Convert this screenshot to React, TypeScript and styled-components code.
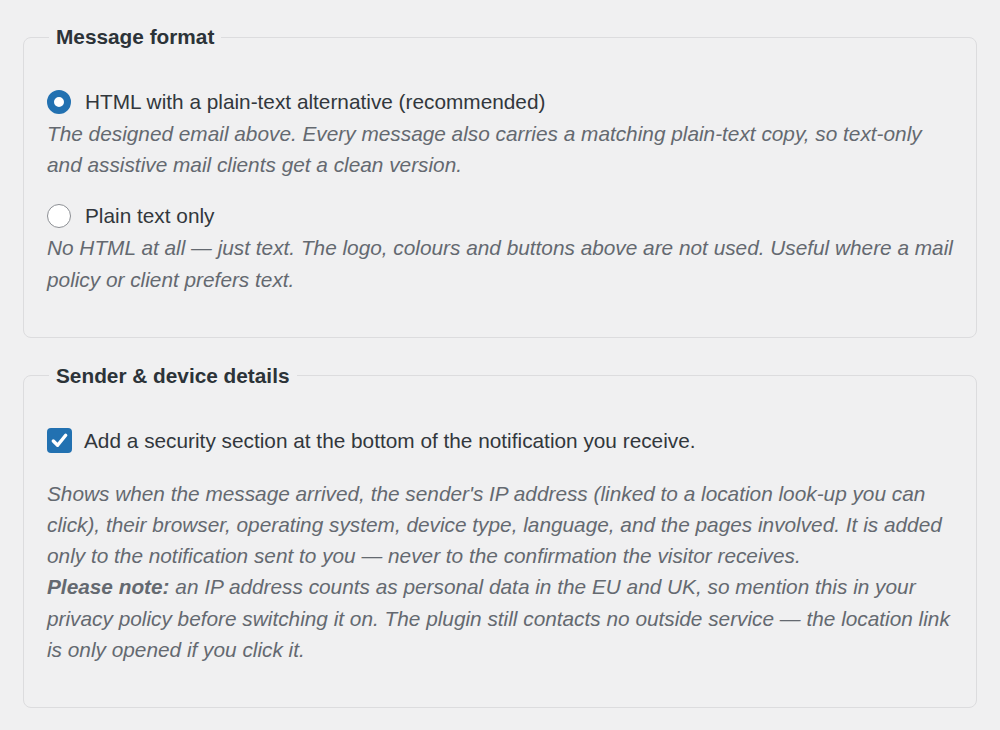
import React from "react";
import styled, { createGlobalStyle } from "styled-components";

const Global = createGlobalStyle`
  html, body { margin: 0; padding: 0; background: #f0f0f1; }
  body { font-family: "Liberation Sans", Arial, sans-serif; color: #2c3338; }
`;

const Page = styled.div`
  padding: 25px 23px 20px;
  display: flex;
  flex-direction: column;
  gap: 26px;
`;

const Fieldset = styled.fieldset`
  margin: 0;
  border: 1px solid #dcdcde;
  border-radius: 8px;
  padding: 38px 23px 42px;
  min-width: 0;
`;

const Legend = styled.legend`
  margin-left: 2px;
  padding: 0 7px;
  font-size: 20.8px;
  line-height: 24px;
  font-weight: 700;
  color: #2c3338;
`;

const OptionList = styled.div`
  display: flex;
  flex-direction: column;
  gap: 21px;
`;

const Option = styled.div`
  display: flex;
  flex-direction: column;
  gap: 1px;
`;

const Label = styled.label<{ $gap: number }>`
  display: flex;
  align-items: center;
  gap: ${(p) => p.$gap}px;
  font-size: 20.8px;
  line-height: 30px;
  color: #32373c;
`;

const Radio = styled.span<{ $checked?: boolean }>`
  box-sizing: border-box;
  flex: none;
  width: 24px;
  height: 24px;
  border-radius: 50%;
  background: #fff;
  border: ${(p) => (p.$checked ? "7px solid #2271b1" : "1.5px solid #8c8f94")};
`;

const Checkbox = styled.span`
  flex: none;
  width: 25px;
  height: 25px;
  border-radius: 4px;
  background: #2271b1;
  display: flex;
  align-items: center;
  justify-content: center;
`;

const Description = styled.p<{ $top?: number }>`
  margin: ${(p) => p.$top ?? 0}px 0 0;
  font-size: 20.8px;
  line-height: 31.2px;
  font-style: italic;
  color: #646970;

  strong {
    font-weight: 700;
  }
`;

export default function App() {
  return (
    <>
      <Global />
      <Page>
        <Fieldset>
          <Legend>Message format</Legend>
          <OptionList>
            <Option>
              <Label $gap={14}>
                <Radio $checked />
                HTML with a plain-text alternative (recommended)
              </Label>
              <Description>
                The designed email above. Every message also carries a matching
                plain-text copy, so text-only and assistive mail clients get a
                clean version.
              </Description>
            </Option>
            <Option>
              <Label $gap={14}>
                <Radio />
                Plain text only
              </Label>
              <Description>
                No HTML at all — just text. The logo, colours and buttons above
                are not used. Useful where a mail policy or client prefers text.
              </Description>
            </Option>
          </OptionList>
        </Fieldset>
        <Fieldset>
          <Legend>Sender &amp; device details</Legend>
          <Label $gap={12}>
            <Checkbox>
              <svg width="19" height="19" viewBox="0 0 20 20">
                <path
                  d="M3.5 10.5 L8 15 L16.5 4.5"
                  fill="none"
                  stroke="#fff"
                  strokeWidth="3.6"
                  strokeLinecap="round"
                  strokeLinejoin="round"
                />
              </svg>
            </Checkbox>
            Add a security section at the bottom of the notification you receive.
          </Label>
          <Description $top={22}>
            Shows when the message arrived, the sender's IP address (linked to a
            location look-up you can click), their browser, operating system,
            device type, language, and the pages involved. It is added only to
            the notification sent to you — never to the confirmation the visitor
            receives.
            <br />
            <strong>Please note:</strong> an IP address counts as personal data
            in the EU and UK, so mention this in your privacy policy before
            switching it on. The plugin still contacts no outside service — the
            location link is only opened if you click it.
          </Description>
        </Fieldset>
      </Page>
    </>
  );
}
